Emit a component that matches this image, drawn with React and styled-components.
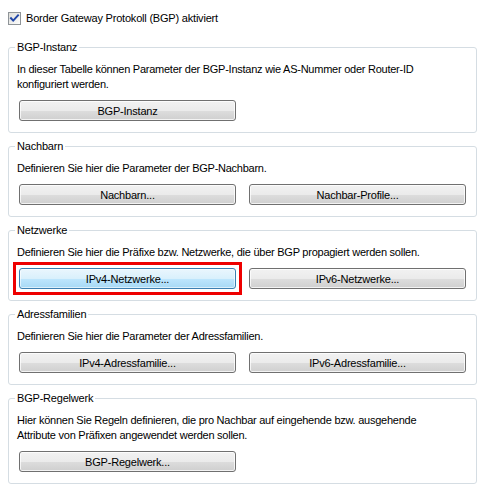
import React from "react"
import styled, { createGlobalStyle, css } from "styled-components"

const GlobalStyle = createGlobalStyle`
  body {
    margin: 0;
    background: #fff;
    font-family: "Liberation Sans", Arial, sans-serif;
    font-size: 11px;
    color: #000;
  }
`

const Page = styled.div`
  width: 469px;
  padding: 11px 8px 0 8px;
`

const CheckRow = styled.label`
  display: flex;
  align-items: center;
  gap: 5px;
  height: 14px;
  line-height: 14px;
  letter-spacing: -0.2px;
`

const CheckBox = styled.svg`
  flex: none;
  display: block;
`

const Group = styled.fieldset`
  margin: ${(p) => (p.$first ? 15 : 6)}px 0 0;
  padding: 0 8px 11px 8px;
  border: 1px solid #d5dde3;
  border-radius: 3px;
  min-width: 0;
  box-sizing: border-box;
  width: 469px;
`

const Legend = styled.legend`
  padding: 0 2px;
  margin-left: -2px;
  line-height: 14px;
  letter-spacing: -0.2px;
`

const Description = styled.p`
  margin: 8px 0 0;
  line-height: 15px;
  letter-spacing: -0.25px;
  white-space: nowrap;
`

const ButtonRow = styled.div`
  display: grid;
  grid-template-columns: 217px 217px;
  column-gap: 13px;
  margin-top: 8px;
  padding-left: 2px;
`

const Highlight = styled.div`
  outline: 3px solid #ee0000;
  outline-offset: 3px;
  display: flex;
`

const Button = styled.button`
  width: 217px;
  height: 21px;
  padding: 0;
  border: 1px solid #707070;
  border-radius: 3px;
  font-family: "Liberation Sans", Arial, sans-serif;
  font-size: 11px;
  letter-spacing: -0.2px;
  color: #000;
  box-shadow: inset 0 0 0 1px rgba(255, 255, 255, 0.75);
  background: linear-gradient(
    to bottom,
    #f2f2f2 0%,
    #ebebeb 50%,
    #dddddd 51%,
    #cfcfcf 100%
  );
  ${(p) =>
    p.$active &&
    css`
      border-color: #3c7fb1;
      box-shadow: inset 0 0 0 1px rgba(255, 255, 255, 0.6);
      background: linear-gradient(
        to bottom,
        #eaf6fd 0%,
        #d9f0fc 50%,
        #bee6fd 51%,
        #a7d9f5 100%
      );
    `}
`

const Check = () => (
  <CheckBox width="13" height="13" viewBox="0 0 13 13">
    <defs>
      <linearGradient id="cb" x1="0" y1="0" x2="1" y2="1">
        <stop offset="0" stopColor="#dcdcd7" />
        <stop offset="1" stopColor="#ffffff" />
      </linearGradient>
    </defs>
    <rect x="0.5" y="0.5" width="12" height="12" fill="url(#cb)" stroke="#8f9498" />
    <path
      d="M3 6.2 L5.2 8.6 L10 3.4"
      fill="none"
      stroke="#2147a8"
      strokeWidth="2"
      strokeLinecap="square"
    />
  </CheckBox>
)

const groups = [
  {
    title: "BGP-Instanz",
    text: [
      "In dieser Tabelle können Parameter der BGP-Instanz wie AS-Nummer oder Router-ID",
      "konfiguriert werden.",
    ],
    buttons: ["BGP-Instanz"],
  },
  {
    title: "Nachbarn",
    text: ["Definieren Sie hier die Parameter der BGP-Nachbarn."],
    buttons: ["Nachbarn...", "Nachbar-Profile..."],
  },
  {
    title: "Netzwerke",
    text: [
      "Definieren Sie hier die Präfixe bzw. Netzwerke, die über BGP propagiert werden sollen.",
    ],
    buttons: ["IPv4-Netzwerke...", "IPv6-Netzwerke..."],
    highlight: 0,
  },
  {
    title: "Adressfamilien",
    text: ["Definieren Sie hier die Parameter der Adressfamilien."],
    buttons: ["IPv4-Adressfamilie...", "IPv6-Adressfamilie..."],
  },
  {
    title: "BGP-Regelwerk",
    text: [
      "Hier können Sie Regeln definieren, die pro Nachbar auf eingehende bzw. ausgehende",
      "Attribute von Präfixen angewendet werden sollen.",
    ],
    buttons: ["BGP-Regelwerk..."],
  },
]

export default function App() {
  return (
    <>
      <GlobalStyle />
      <Page>
        <CheckRow>
          <Check />
          Border Gateway Protokoll (BGP) aktiviert
        </CheckRow>
        {groups.map((g, i) => (
          <Group key={g.title} $first={i === 0}>
            <Legend>{g.title}</Legend>
            <Description>
              {g.text.map((line, j) => (
                <React.Fragment key={j}>
                  {j > 0 && <br />}
                  {line}
                </React.Fragment>
              ))}
            </Description>
            <ButtonRow>
              {g.buttons.map((b, j) =>
                g.highlight === j ? (
                  <Highlight key={b}>
                    <Button $active>{b}</Button>
                  </Highlight>
                ) : (
                  <Button key={b}>{b}</Button>
                )
              )}
            </ButtonRow>
          </Group>
        ))}
      </Page>
    </>
  )
}
